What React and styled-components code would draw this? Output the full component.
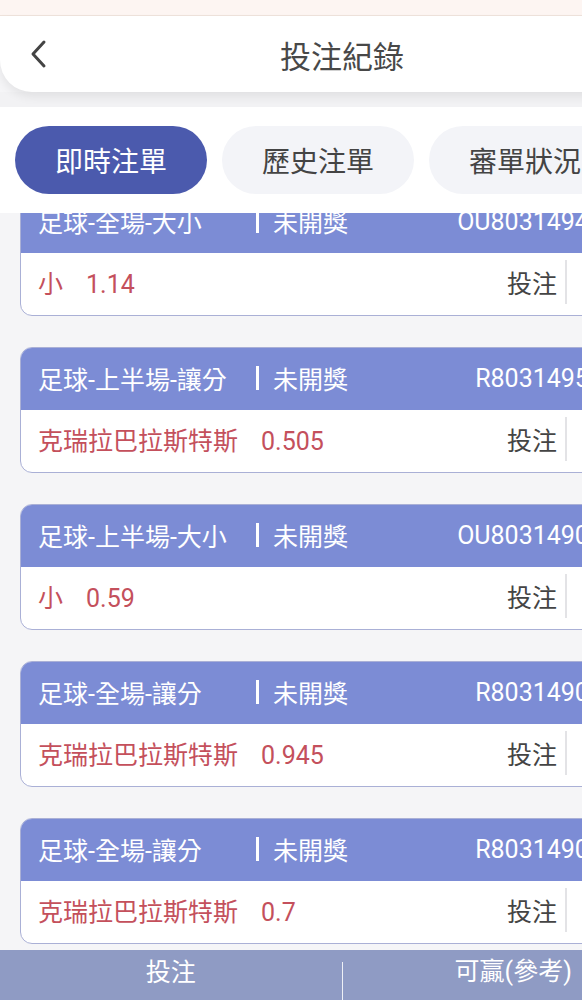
import React from "react";
import styled, { createGlobalStyle } from "styled-components";

const Global = createGlobalStyle`
  html, body { margin: 0; padding: 0; overflow: hidden; background: #f5f5f7; }
  body { font-family: Roboto, "Noto Sans CJK TC", "Noto Sans", sans-serif; }
`;

const Page = styled.div`
  width: 684px;
  height: 100vh;
  display: flex;
  flex-direction: column;
  background: #f5f5f7;
`;

const StatusStrip = styled.div`
  height: 15px;
  flex: none;
  background: #fdf5f2;
  border-bottom: 1px solid #efe3dc;
`;

const Header = styled.header`
  height: 76px;
  flex: none;
  background: #fff;
  border-radius: 0 0 32px 32px;
  box-shadow: 0 5px 10px rgba(0, 0, 0, 0.07);
  display: flex;
  align-items: center;
  justify-content: center;
  position: relative;
  z-index: 2;
`;

const BackButton = styled.button`
  position: absolute;
  left: 24px;
  top: 50%;
  transform: translateY(-50%);
  background: none;
  border: 0;
  padding: 4px;
  display: flex;
`;

const Title = styled.h1`
  margin: 0;
  font-size: 31px;
  font-weight: 400;
  color: #484848;
`;

const Gap = styled.div`
  height: 15px;
  flex: none;
  background: #f2f2f4;
`;

const TabBar = styled.nav`
  height: 106px;
  flex: none;
  box-sizing: border-box;
  background: #fff;
  display: flex;
  align-items: center;
  gap: 15px;
  padding: 0 15px;
  position: relative;
  z-index: 1;
`;

const Tab = styled.div`
  width: 192px;
  height: 68px;
  flex: none;
  border-radius: 34px;
  display: flex;
  align-items: center;
  justify-content: center;
  font-size: 28px;
  background: ${(p) => (p.$active ? "#4b5aad" : "#f3f4f8")};
  color: ${(p) => (p.$active ? "#fff" : "#444")};
`;

const ListViewport = styled.div`
  flex: 1;
  overflow: hidden;
  background: #f5f5f7;
`;

const List = styled.div`
  display: flex;
  flex-direction: column;
  gap: 31px;
  padding: 0 20px;
  margin-top: -23px;
`;

const Card = styled.div`
  border: 1.5px solid #aab0d6;
  border-radius: 12px;
  overflow: hidden;
  background: #fff;
`;

const CardHead = styled.div`
  height: 62px;
  background: #7c8cd5;
  display: flex;
  align-items: center;
  padding: 0 46px 2px 17px;
  box-sizing: border-box;
  color: #fff;
  font-size: 25px;
`;

const BetType = styled.span`
  width: 218px;
  flex: none;
  white-space: nowrap;
`;

const Bar = styled.span`
  width: 3px;
  height: 24px;
  background: #fff;
  flex: none;
  margin-right: 14px;
`;

const Status = styled.span`
  flex: 1;
`;

const OrderId = styled.span`
  white-space: nowrap;
`;

const CardBody = styled.div`
  height: 62px;
  display: flex;
  align-items: center;
  padding: 0 0 4px 17px;
  box-sizing: border-box;
  font-size: 25px;
`;

const Pick = styled.div`
  color: #c4505c;
  flex: 1;
  white-space: nowrap;
`;

const Odds = styled.span`
  margin-left: 23px;
`;

const Cell = styled.div`
  height: 44px;
  display: flex;
  align-items: center;
  color: #444;
  padding-right: 8px;
  border-right: 2px solid #e3e3e6;
`;

const Win = styled.div`
  width: 96px;
`;

const BottomBar = styled.footer`
  height: 50px;
  flex: none;
  background: #8f9bc4;
  display: flex;
  color: #fff;
  font-size: 25px;
`;

const FootCell = styled.div`
  flex: 1;
  display: flex;
  justify-content: center;
  align-items: flex-start;
  padding-top: 3px;
  box-sizing: border-box;
  & + & {
    border-left: 1px solid rgba(255, 255, 255, 0.85);
    margin-top: 12px;
    padding-top: 0;
  }
`;

const FootText = styled.span`
  line-height: 1.6;
  position: relative;
  top: ${(p) => p.$shift || 0}px;
`;

const bets = [
  { type: "足球-全場-大小", id: "OU803149492", pick: "小", odds: "1.14" },
  { type: "足球-上半場-讓分", id: "R803149501", pick: "克瑞拉巴拉斯特斯", odds: "0.505" },
  { type: "足球-上半場-大小", id: "OU803149011", pick: "小", odds: "0.59" },
  { type: "足球-全場-讓分", id: "R803149002", pick: "克瑞拉巴拉斯特斯", odds: "0.945" },
  { type: "足球-全場-讓分", id: "R803149001", pick: "克瑞拉巴拉斯特斯", odds: "0.7" },
];

export default function App() {
  return (
    <Page>
      <Global />
      <StatusStrip />
      <Header>
        <BackButton aria-label="back">
          <svg width="22" height="32" viewBox="0 0 22 32">
            <polyline points="16,4 5,16 16,28" fill="none" stroke="#444" strokeWidth="3" strokeLinecap="round" strokeLinejoin="round" />
          </svg>
        </BackButton>
        <Title>投注紀錄</Title>
      </Header>
      <Gap />
      <TabBar>
        <Tab $active>即時注單</Tab>
        <Tab>歷史注單</Tab>
        <Tab>審單狀況</Tab>
      </TabBar>
      <ListViewport>
        <List>
          {bets.map((b, i) => (
            <Card key={i}>
              <CardHead>
                <BetType>{b.type}</BetType>
                <Bar />
                <Status>未開獎</Status>
                <OrderId>{b.id}</OrderId>
              </CardHead>
              <CardBody>
                <Pick>
                  {b.pick}
                  <Odds>{b.odds}</Odds>
                </Pick>
                <Cell>投注</Cell>
                <Win />
              </CardBody>
            </Card>
          ))}
        </List>
      </ListViewport>
      <BottomBar>
        <FootCell><FootText>投注</FootText></FootCell>
        <FootCell><FootText $shift={-10}>可贏(參考)</FootText></FootCell>
      </BottomBar>
    </Page>
  );
}
